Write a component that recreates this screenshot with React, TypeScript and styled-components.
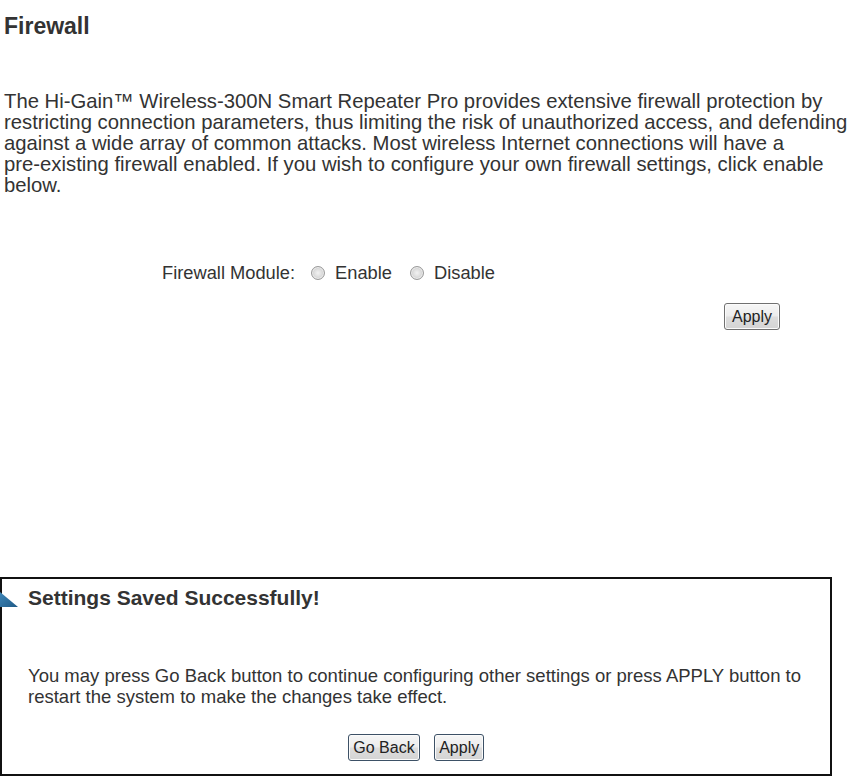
import React from "react";
import styled, { createGlobalStyle } from "styled-components";

const Global = createGlobalStyle`
  html, body { margin: 0; padding: 0; background: #ffffff; }
  body { font-family: Arial, "Liberation Sans", sans-serif; color: #333333; }
`;

const Page = styled.div`
  width: 865px;
  height: 776px;
  display: flex;
  flex-direction: column;
  overflow: hidden;
`;

const Main = styled.div`
  padding: 13px 4px 0 4px;
  display: flex;
  flex-direction: column;
`;

const Title = styled.h1`
  margin: 0;
  font-size: 23px;
  font-weight: bold;
  line-height: 27px;
  color: #333;
`;

const Paragraph = styled.p`
  margin: 51px 0 0 0;
  font-size: 20.3px;
  line-height: 21px;
  color: #333;
  white-space: nowrap;
`;

const ModuleRow = styled.div`
  margin: 66px 0 0 158px;
  display: flex;
  align-items: center;
  font-size: 18.3px;
  line-height: 21px;
  color: #333;
`;

const Label = styled.span`
  margin-right: 16px;
`;

const RadioOption = styled.label`
  display: flex;
  align-items: center;
  gap: 10px;
  margin-right: 18px;
`;

const RadioDot = styled.span`
  width: 14px;
  height: 14px;
  border-radius: 50%;
  box-sizing: border-box;
  border: 1px solid #9a9a9a;
  background: radial-gradient(circle at 50% 50%, #f2f2f2 0%, #e0e0e0 40%, #bcbcbc 100%);
  box-shadow: inset 0 0 0 1px #ececec;
`;

const ButtonRow = styled.div<{ $justify: string; $pad?: string }>`
  display: flex;
  justify-content: ${(p) => p.$justify};
  gap: 14px;
  padding: ${(p) => p.$pad || "0"};
`;

const Button = styled.button<{ $blue?: boolean; $padX?: number }>`
  font-family: Arial, "Liberation Sans", sans-serif;
  font-size: 16px;
  color: #222;
  height: 27px;
  padding: 0 ${(p) => p.$padX ?? 5}px;
  border-radius: 3px;
  border: 1px solid ${(p) => (p.$blue ? "#3d5166" : "#707070")};
  background: linear-gradient(#f6f6f6 0%, #ececec 48%, #dddddd 52%, #d4d4d4 100%);
  box-shadow: inset 0 0 0 1px #fbfbfb;
  cursor: pointer;
`;

const Notice = styled.div`
  margin-top: auto;
  width: 832px;
  height: 199px;
  box-sizing: border-box;
  border: 2px solid #111;
  display: flex;
  flex-direction: column;
`;

const NoticeHead = styled.div`
  display: flex;
  align-items: center;
  margin-top: 8px;
  height: 21px;
`;

const Triangle = styled.svg`
  width: 18px;
  height: 15px;
  margin-left: -2px;
  margin-right: 10px;
  margin-top: 4px;
`;

const NoticeTitle = styled.span`
  font-size: 21px;
  font-weight: bold;
  color: #333;
`;

const NoticeBody = styled.p`
  margin: 57px 0 0 26px;
  font-size: 18.5px;
  line-height: 21px;
  color: #333;
  white-space: nowrap;
`;

export default function App() {
  return (
    <Page>
      <Global />
      <Main>
        <Title>Firewall</Title>
        <Paragraph>
          The Hi-Gain™ Wireless-300N Smart Repeater Pro provides extensive firewall protection by
          <br />
          restricting connection parameters, thus limiting the risk of unauthorized access, and defending
          <br />
          against a wide array of common attacks. Most wireless Internet connections will have a
          <br />
          pre-existing firewall enabled. If you wish to configure your own firewall settings, click enable
          <br />
          below.
        </Paragraph>
        <ModuleRow>
          <Label>Firewall Module:</Label>
          <RadioOption>
            <RadioDot />
            Enable
          </RadioOption>
          <RadioOption>
            <RadioDot />
            Disable
          </RadioOption>
        </ModuleRow>
        <ButtonRow $justify="flex-start" $pad="20px 0 0 720px">
          <Button $padX={7}>Apply</Button>
        </ButtonRow>
      </Main>
      <Notice>
        <NoticeHead>
          <Triangle viewBox="0 0 18 15">
            <defs>
              <linearGradient id="tri" x1="0" y1="0" x2="1" y2="1">
                <stop offset="0" stopColor="#3f86b8" />
                <stop offset="1" stopColor="#1f5a86" />
              </linearGradient>
            </defs>
            <polygon points="0,0 18,15 0,15" fill="url(#tri)" />
          </Triangle>
          <NoticeTitle>Settings Saved Successfully!</NoticeTitle>
        </NoticeHead>
        <NoticeBody>
          You may press Go Back button to continue configuring other settings or press APPLY button to
          <br />
          restart the system to make the changes take effect.
        </NoticeBody>
        <ButtonRow $justify="center" $pad="27px 0 0 0">
          <Button $blue $padX={4.5}>Go Back</Button>
          <Button $blue $padX={4}>Apply</Button>
        </ButtonRow>
      </Notice>
    </Page>
  );
}
